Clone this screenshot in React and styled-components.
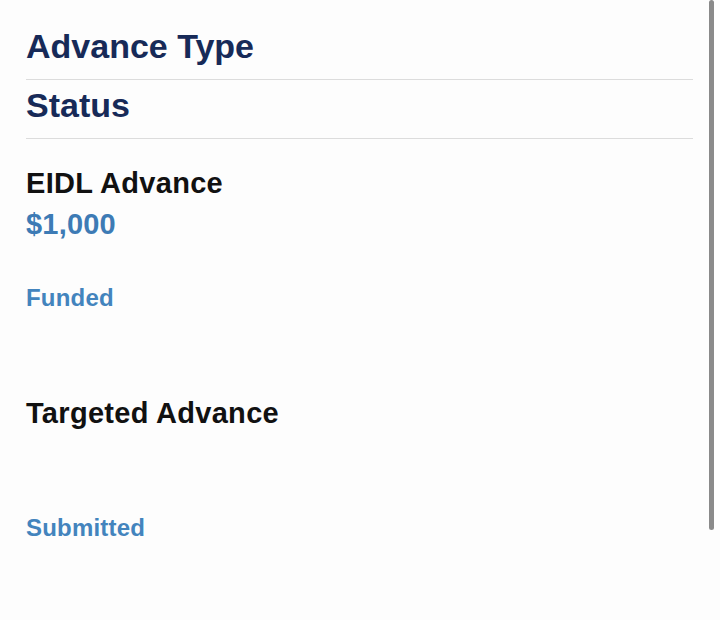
import React from "react";
import styled, { createGlobalStyle } from "styled-components";

const GlobalStyle = createGlobalStyle`
  html, body {
    margin: 0;
    padding: 0;
    background: #fdfdfd;
    font-family: "Liberation Sans", Arial, Helvetica, sans-serif;
  }
`;

const Screen = styled.div`
  position: relative;
  width: 720px;
  height: 620px;
  overflow: hidden;
  background: #fdfdfd;
`;

const Content = styled.div`
  width: 667px;
  padding: 21px 0 0 26px;
`;

const Heading = styled.h2`
  margin: 0;
  padding: 6px 0 14px;
  font-size: 34px;
  line-height: 38px;
  font-weight: 700;
  color: #172a58;
  border-bottom: 1px solid #dcdcdc;
`;

const AdvanceList = styled.div`
  display: flex;
  flex-direction: column;
  gap: 84px;
  padding-top: 27px;
`;

const Advance = styled.div`
  display: flex;
  flex-direction: column;
`;

const AdvanceName = styled.div`
  font-size: 29px;
  line-height: 34px;
  font-weight: 700;
  letter-spacing: 0.3px;
  color: #111;
  margin-bottom: 7px;
`;

const Amount = styled.div`
  min-height: 34px;
  font-size: 29px;
  line-height: 34px;
  font-weight: 700;
  letter-spacing: 0.2px;
  color: #3d7bb5;
  margin-bottom: 43px;
`;

const StatusLabel = styled.div`
  font-size: 24px;
  line-height: 28px;
  font-weight: 700;
  letter-spacing: 0.2px;
  color: #4384bd;
`;

const ScrollThumb = styled.div`
  position: absolute;
  top: 0;
  right: 6px;
  width: 5px;
  height: 530px;
  border-radius: 3px;
  background: #8a8a8a;
`;

const advances = [
  { name: "EIDL Advance", amount: "$1,000", status: "Funded" },
  { name: "Targeted Advance", amount: "", status: "Submitted" },
];

export default function App() {
  return (
    <Screen>
      <GlobalStyle />
      <Content>
        <Heading>Advance Type</Heading>
        <Heading>Status</Heading>
        <AdvanceList>
          {advances.map((a) => (
            <Advance key={a.name}>
              <AdvanceName>{a.name}</AdvanceName>
              <Amount>{a.amount}</Amount>
              <StatusLabel>{a.status}</StatusLabel>
            </Advance>
          ))}
        </AdvanceList>
      </Content>
      <ScrollThumb />
    </Screen>
  );
}
